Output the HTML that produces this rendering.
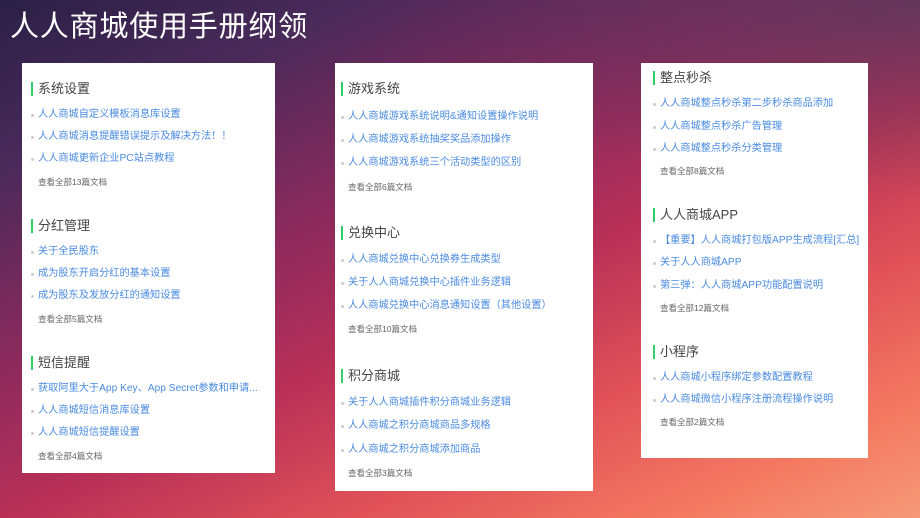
<!DOCTYPE html>
<html><head><meta charset="utf-8"><style>
*{margin:0;padding:0}
body{width:920px;height:518px;overflow:hidden;position:relative;font-family:"Liberation Sans","Noto Sans CJK SC",sans-serif;
background:linear-gradient(155deg,#2a2046 0%,#4a2a5a 18%,#8a2a5c 38%,#b83058 55%,#e05258 72%,#f47a62 88%,#f59a78 100%);}
body:after{content:"";position:absolute;right:0;top:0;width:500px;height:200px;background:radial-gradient(ellipse at 100% 0%,rgba(60,60,90,0.6),rgba(60,60,90,0) 70%)}
.h1{position:absolute;left:10px;top:9px;font-size:29px;color:#fff;letter-spacing:0.8px;line-height:36px;z-index:2}
.card{position:absolute;background:#fff;z-index:1}
.t,.i,.v{z-index:2}
.t{position:absolute;font-size:13px;color:#444;line-height:16px;white-space:nowrap}
.t:before{content:"";position:absolute;left:-7px;top:1px;width:2px;height:14px;background:#3c6}
.i{position:absolute;font-size:10.2px;color:#4a8be0;line-height:14px;white-space:nowrap}
.i:before{content:"";position:absolute;left:-7px;top:6px;width:3px;height:3px;background:#ccc;border-radius:50%}
.v{position:absolute;font-size:8.5px;color:#666;line-height:12px;white-space:nowrap}
</style></head><body>
<div class="h1">人人商城使用手册纲领</div>
<div class="card" style="left:22px;top:63px;width:253px;height:410px"></div>
<div class="card" style="left:335px;top:63px;width:258px;height:428px"></div>
<div class="card" style="left:641px;top:63px;width:227px;height:395px"></div>

<div class="t" style="left:38px;top:81px">系统设置</div>
<div class="i" style="left:38px;top:108px">人人商城自定义模板消息库设置</div>
<div class="i" style="left:38px;top:130px">人人商城消息提醒错误提示及解决方法！！</div>
<div class="i" style="left:38px;top:152px">人人商城更新企业PC站点教程</div>
<div class="v" style="left:38px;top:176px">查看全部13篇文档</div>
<div class="t" style="left:38px;top:218px">分红管理</div>
<div class="i" style="left:38px;top:245px">关于全民股东</div>
<div class="i" style="left:38px;top:267px">成为股东开启分红的基本设置</div>
<div class="i" style="left:38px;top:289px">成为股东及发放分红的通知设置</div>
<div class="v" style="left:38px;top:313px">查看全部5篇文档</div>
<div class="t" style="left:38px;top:355px">短信提醒</div>
<div class="i" style="left:38px;top:382px">获取阿里大于App Key、App Secret参数和申请...</div>
<div class="i" style="left:38px;top:404px">人人商城短信消息库设置</div>
<div class="i" style="left:38px;top:426px">人人商城短信提醒设置</div>
<div class="v" style="left:38px;top:450px">查看全部4篇文档</div>

<div class="t" style="left:348px;top:81px">游戏系统</div>
<div class="i" style="left:348px;top:110px">人人商城游戏系统说明&amp;通知设置操作说明</div>
<div class="i" style="left:348px;top:133px">人人商城游戏系统抽奖奖品添加操作</div>
<div class="i" style="left:348px;top:156px">人人商城游戏系统三个活动类型的区别</div>
<div class="v" style="left:348px;top:181px">查看全部6篇文档</div>
<div class="t" style="left:348px;top:225px">兑换中心</div>
<div class="i" style="left:348px;top:253px">人人商城兑换中心兑换券生成类型</div>
<div class="i" style="left:348px;top:276px">关于人人商城兑换中心插件业务逻辑</div>
<div class="i" style="left:348px;top:299px">人人商城兑换中心消息通知设置（其他设置）</div>
<div class="v" style="left:348px;top:323px">查看全部10篇文档</div>
<div class="t" style="left:348px;top:368px">积分商城</div>
<div class="i" style="left:348px;top:396px">关于人人商城插件积分商城业务逻辑</div>
<div class="i" style="left:348px;top:419px">人人商城之积分商城商品多规格</div>
<div class="i" style="left:348px;top:443px">人人商城之积分商城添加商品</div>
<div class="v" style="left:348px;top:467px">查看全部3篇文档</div>

<div class="t" style="left:660px;top:70px">整点秒杀</div>
<div class="i" style="left:660px;top:97px">人人商城整点秒杀第二步秒杀商品添加</div>
<div class="i" style="left:660px;top:120px">人人商城整点秒杀广告管理</div>
<div class="i" style="left:660px;top:142px">人人商城整点秒杀分类管理</div>
<div class="v" style="left:660px;top:165px">查看全部8篇文档</div>
<div class="t" style="left:660px;top:207px">人人商城APP</div>
<div class="i" style="left:660px;top:234px">【重要】人人商城打包版APP生成流程[汇总]</div>
<div class="i" style="left:660px;top:256px">关于人人商城APP</div>
<div class="i" style="left:660px;top:279px">第三弹：人人商城APP功能配置说明</div>
<div class="v" style="left:660px;top:302px">查看全部12篇文档</div>
<div class="t" style="left:660px;top:344px">小程序</div>
<div class="i" style="left:660px;top:371px">人人商城小程序绑定参数配置教程</div>
<div class="i" style="left:660px;top:393px">人人商城微信小程序注册流程操作说明</div>
<div class="v" style="left:660px;top:416px">查看全部2篇文档</div>
</body></html>
